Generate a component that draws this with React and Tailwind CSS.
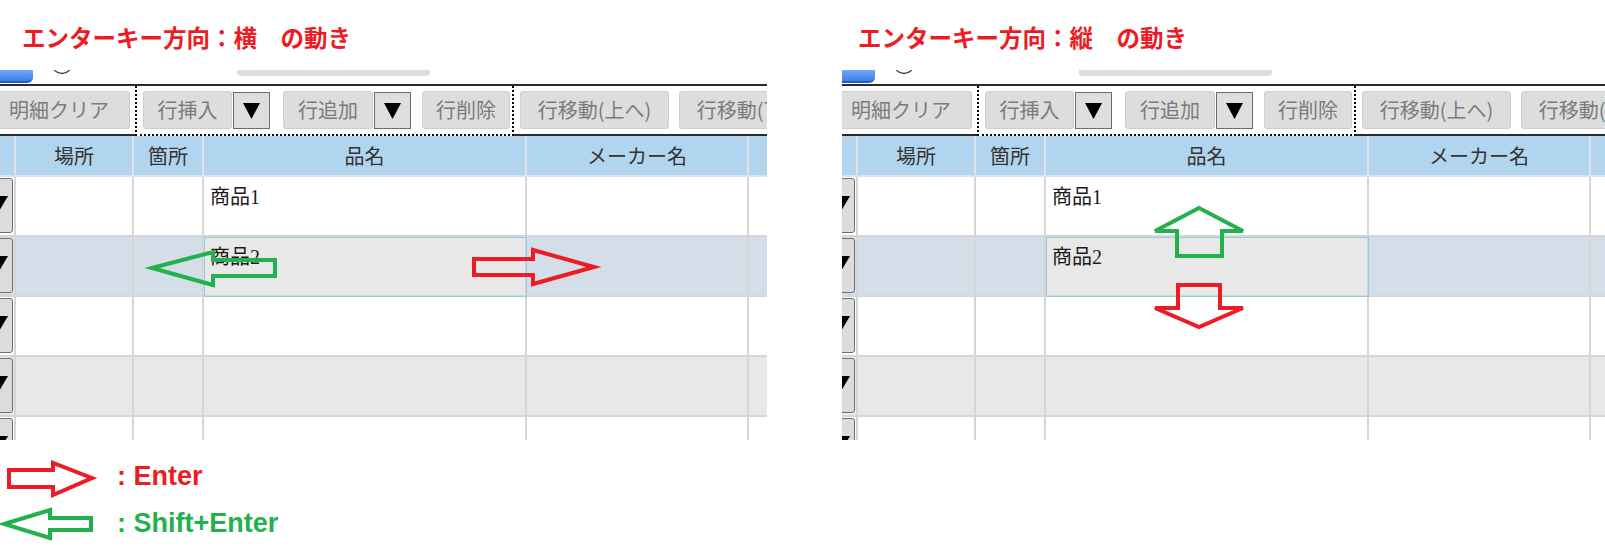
import React from 'react'

const ROWS = [
  { bg: 'bg-white', name: '商品1' },
  { bg: 'bg-[#d3dee8]', name: '商品2', sel: true },
  { bg: 'bg-white' },
  { bg: 'bg-[#e8e8e8]' },
  { bg: 'bg-white' },
]

function Tri({ w = 17, h = 16 }) {
  return (
    <svg width={w} height={h} viewBox={`0 0 ${w} ${h}`} className="shrink-0">
      <polygon points={`0,0 ${w},0 ${w / 2},${h}`} fill="#000" />
    </svg>
  )
}

function Btn({ children, className = '' }) {
  return (
    <div className={`h-[38px] mt-[5px] shrink-0 flex items-center justify-center rounded-[3px] border border-[#cfcfcf] bg-[#dddddd] text-[20px] leading-none text-[#7b7b7b] whitespace-nowrap ${className}`}>
      {children}
    </div>
  )
}

function Drop({ className = '' }) {
  return (
    <div className={`h-[37px] w-[37px] mt-[6px] shrink-0 flex items-center justify-center border border-[#6b6b6b] bg-[#dedede] ${className}`}>
      <Tri />
    </div>
  )
}

function Panel({ width, arrows }) {
  return (
    <div className={`relative overflow-hidden h-[370px] shrink-0 ${width}`}>
      {/* cropped top of the screen */}
      <div className="h-[14px] flex items-start">
        <div className="w-[45px] -ml-[12px] h-[13px] shrink-0 rounded-b-[6px] border-b-2 border-[#2a5cc0] bg-linear-to-b from-[#6fa9fb] to-[#3f7fe8]" />
        <svg width="18" height="5" viewBox="0 0 18 5" className="ml-[20px] shrink-0">
          <path d="M1 0 Q9 7 17 0" stroke="#444" strokeWidth="1.3" fill="none" />
        </svg>
        <div className="ml-[166px] w-[193px] h-[6px] shrink-0 rounded-b-[4px] bg-[#dedede]" />
      </div>
      <div className="h-[2px] bg-[#2b2b2b]" />

      {/* toolbar */}
      <div className="h-[50px] border-b-2 border-[#2b2b2b] flex items-start font-['Noto_Sans_CJK_JP',sans-serif]">
        <Btn className="w-[142px] -ml-[12px]">明細クリア</Btn>
        <div className="ml-[5px] h-[50px] w-[379px] shrink-0 flex items-start bg-white border-l-2 border-r-2 border-b-2 border-dotted border-black">
          <Btn className="ml-[6px] w-[89px]">行挿入</Btn>
          <Drop className="ml-[1px]" />
          <Btn className="ml-[13px] w-[90px]">行追加</Btn>
          <Drop className="ml-[1px]" />
          <Btn className="ml-[11px] w-[88px]">行削除</Btn>
        </div>
        <Btn className="ml-[6px] w-[149px]">行移動(上へ)</Btn>
        <Btn className="ml-[10px] w-[149px]">行移動(下へ)</Btn>
      </div>

      {/* grid */}
      <div className="grid grid-cols-[16px_118px_70px_323px_222px_200px] h-[41px] bg-[#b1d5ee] text-[20px] text-[#333] font-['Noto_Sans_CJK_JP',sans-serif]">
        {['', '場所', '箇所', '品名', 'メーカー名', ''].map((h, i) => (
          <div key={i} className="border-r-2 border-b-2 border-[#dde3e8] flex items-center justify-center whitespace-nowrap">{h}</div>
        ))}
      </div>
      {ROWS.map((r, i) => (
        <div key={i} className={`grid grid-cols-[16px_118px_70px_323px_222px_200px] h-[60px] ${r.bg}`}>
          <div className="border-r-2 border-b-2 border-[#d6d6d6] overflow-hidden">
            <div className="w-[40px] -ml-[27px] h-[55px] mt-[1px] pt-[17px] pr-[4px] flex justify-end items-start rounded-[3px] border border-[#707070] bg-[#dcdcdc]">
              <Tri w={20} h={17} />
            </div>
          </div>
          <div className="border-r-2 border-b-2 border-[#d6d6d6]" />
          <div className="border-r-2 border-b-2 border-[#d6d6d6]" />
          <div className={`border-r-2 border-b-2 border-[#d6d6d6] pl-[6px] pt-[10px] text-[20px] leading-[20px] text-[#1a1a1a] font-['Liberation_Serif','Noto_Sans_CJK_JP',serif] ${r.sel ? 'bg-[#e8e8e8] outline outline-1 -outline-offset-1 outline-[#92cde0]' : ''}`}>
            {r.name}
          </div>
          <div className="border-r-2 border-b-2 border-[#d6d6d6]" />
          <div className="border-r-2 border-b-2 border-[#d6d6d6]" />
        </div>
      ))}

      {/* arrows drawn over the grid */}
      <svg className="absolute inset-0 pointer-events-none" width="800" height="370">
        {arrows.map((a, i) => (
          <polygon key={i} points={a.points} fill="none" stroke={a.color} strokeWidth="4" strokeLinejoin="miter" />
        ))}
      </svg>
    </div>
  )
}

function Title({ children, className = '' }) {
  return (
    <div className={`h-[70px] pt-[25px] shrink-0 ${className}`}>
      <p className="text-[23.5px] leading-[24px] font-bold text-[#ed1c24] whitespace-nowrap font-['Noto_Sans_CJK_JP',sans-serif]">
        {children}
      </p>
    </div>
  )
}

export default function App() {
  const leftArrows = [
    { color: '#22b14c', points: '152,198 213,182 213,190 275,190 275,206 213,206 213,215' },
    { color: '#ed1c24', points: '474,189 533,189 533,180 594,197 533,214 533,205 474,205' },
  ]
  const rightArrows = [
    { color: '#22b14c', points: '357,138 401,161 380,161 380,186 335,186 335,161 313,161' },
    { color: '#ed1c24', points: '336,215 378,215 378,238 401,238 357,257 313,238 336,238' },
  ]

  return (
    <div className="w-[1605px] h-[547px] bg-white flex overflow-hidden">
      {/* horizontal */}
      <div className="w-[767px] shrink-0 flex flex-col">
        <Title className="pl-[22px]">エンターキー方向：横　の動き</Title>
        <Panel width="w-[767px]" arrows={leftArrows} />

        {/* legend */}
        <div className="flex flex-col font-['Liberation_Sans',sans-serif] font-bold text-[27px] leading-none">
          <div className="mt-[18px] h-[40px] flex items-center">
            <svg width="100" height="40" viewBox="0 0 100 40" className="shrink-0">
              <polygon points="9,12 53,12 53,5 92,20 53,37 53,29 9,29" fill="none" stroke="#ed1c24" strokeWidth="4" />
            </svg>
            <span className="ml-[17px] mb-[4px] text-[#ed1c24]">: Enter</span>
          </div>
          <div className="mt-[7px] h-[40px] flex items-center">
            <svg width="100" height="40" viewBox="0 0 100 40" className="shrink-0">
              <polygon points="4,19 50,5 50,13 91,13 91,25 50,25 50,33" fill="none" stroke="#22b14c" strokeWidth="4" />
            </svg>
            <span className="ml-[17px] mb-[4px] text-[#22b14c]">: Shift+Enter</span>
          </div>
        </div>
      </div>

      {/* vertical */}
      <div className="w-[763px] ml-[75px] shrink-0 flex flex-col">
        <Title className="pl-[16px]">エンターキー方向：縦　の動き</Title>
        <Panel width="w-[763px]" arrows={rightArrows} />
      </div>
    </div>
  )
}
